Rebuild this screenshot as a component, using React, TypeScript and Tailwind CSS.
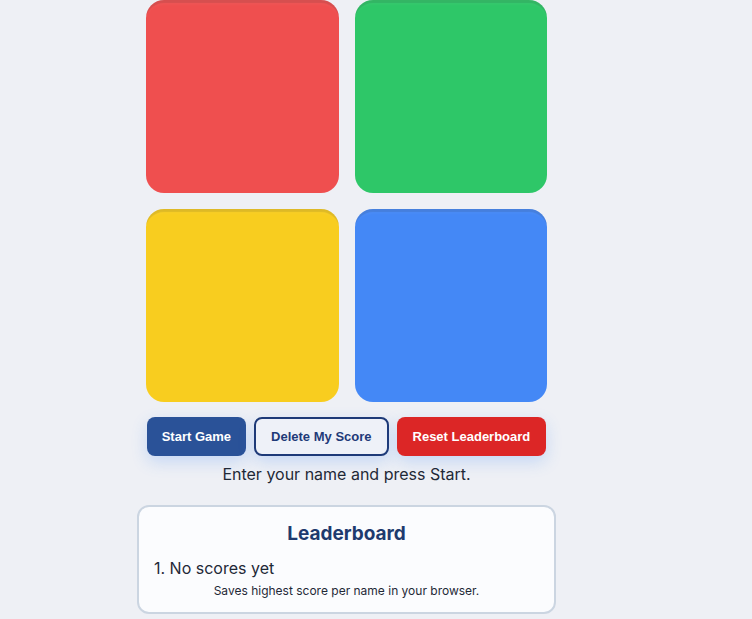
import React from 'react';

const pads = [
  'bg-[#ef4f4f]',
  'bg-[#2ec768]',
  'bg-[#f8cd1f]',
  'bg-[#4488f6]',
];

const App: React.FC = () => {
  return (
    <div className="min-h-[619px] bg-[#eef0f5] font-['Inter',sans-serif] text-[#1f2937]">
      <div className="w-[693px] flex flex-col items-center">
        <div className="grid grid-cols-2 gap-4 w-[401px]">
          {pads.map((c, i) => (
            <div
              key={i}
              className={`${c} h-[193px] rounded-[18px] shadow-[inset_0_4px_1px_-1px_rgba(0,0,0,0.1),inset_0_6px_3px_-2px_rgba(255,255,255,0.06)]`}
            />
          ))}
        </div>

        <div className="flex gap-2 mt-[15px] font-['Liberation_Sans',Arial,sans-serif] text-[13px] font-bold">
          <button className="h-[39px] px-[15px] rounded-lg bg-[#2a5298] text-white shadow-[0_6px_16px_rgba(59,130,246,0.22)]">
            Start Game
          </button>
          <button className="h-[39px] px-[15px] rounded-lg border-2 border-[#1e3a78] text-[#1e3a78] bg-[#eef1f8] shadow-[0_6px_16px_rgba(59,130,246,0.22)]">
            Delete My Score
          </button>
          <button className="h-[39px] px-[16px] rounded-lg bg-[#dc2626] text-white shadow-[0_6px_16px_rgba(59,130,246,0.22)]">
            Reset Leaderboard
          </button>
        </div>

        <p className="mt-[8px] text-[16px] leading-[20px]">Enter your name and press Start.</p>

        <div className="mt-[21px] w-[419px] rounded-xl border-2 border-[#cbd5e1] bg-[#fbfcfe] px-[15px] pt-[14px] pb-[13px]">
          <h2 className="text-center text-[19px] font-bold text-[#1e3a6e] leading-[26px]">Leaderboard</h2>
          <ol className="mt-[11px] text-[16px] leading-[20px]">
            <li>1. No scores yet</li>
          </ol>
          <p className="text-center text-[12px] leading-[16px] mt-[5px]">
            Saves highest score per name in your browser.
          </p>
        </div>
      </div>
    </div>
  );
};

export default App;
